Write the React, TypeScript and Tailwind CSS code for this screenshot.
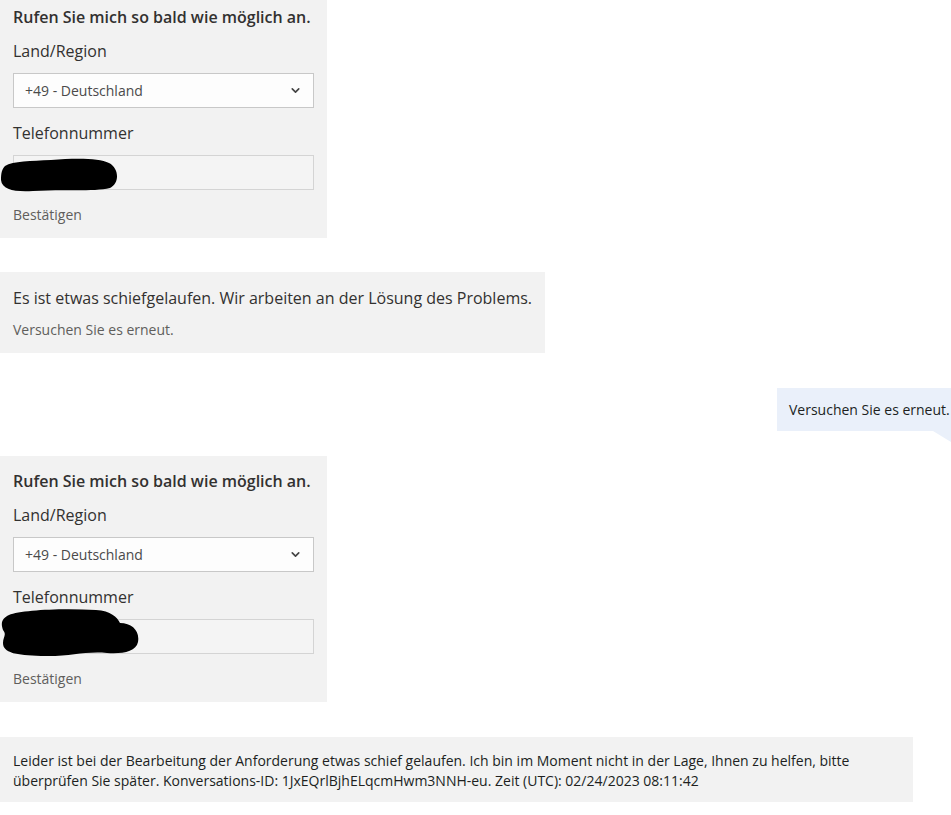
import { ChevronDown } from "lucide-react";

const font = { fontFamily: "'Open Sans', 'Noto Sans', sans-serif" };

function Scribble({ variant }: { variant: 1 | 2 }) {
  if (variant === 1) {
    return (
      <svg
        className="absolute left-[-13px] top-[1px]"
        width="118"
        height="35"
        viewBox="0 0 118 35"
      >
        <path
          d="M4 9 C12 4, 30 4, 50 3 C75 1, 98 1, 108 6 C118 11, 119 26, 109 31 C92 35, 62 32, 32 34 C14 35, 1 33, 0 23 C0 16, 1 12, 4 9Z"
          fill="#000"
        />
      </svg>
    );
  }
  return (
    <svg
      className="absolute left-[-13px] top-[-12px]"
      width="138"
      height="50"
      viewBox="0 0 138 50"
    >
      <path
        d="M8 7 C20 2, 60 0, 95 2 C110 3, 116 9, 119 15 C131 15, 139 23, 137 34 C135 44, 121 46, 106 45 C82 43, 70 49, 40 48 C15 47, 2 45, 2 35 C2 29, 6 27, 2 22 C-1 14, 2 10, 8 7Z"
        fill="#000"
      />
    </svg>
  );
}

function CallCard({ top, variant }: { top: string; variant: 1 | 2 }) {
  return (
    <div className={`w-[327px] bg-[#f2f2f2] px-[13px] pb-[13px] ${top}`}>
      <h2 className="text-[16px] leading-[22px] font-semibold text-[#323130]">
        Rufen Sie mich so bald wie möglich an.
      </h2>
      <div className="mt-[12px] text-[16px] leading-[22px] text-[#323130]">
        Land/Region
      </div>
      <div className="mt-[11px] flex h-[35px] items-center justify-between border border-[#c8c8c8] bg-[#fdfdfd] pl-[11px] pr-[11px] text-[14px] text-[#4a4a4a]">
        <span>+49 - Deutschland</span>
        <ChevronDown size={13} strokeWidth={3} className="text-[#444]" />
      </div>
      <div className="mt-[14px] text-[16px] leading-[22px] text-[#323130]">
        Telefonnummer
      </div>
      <div className="relative mt-[11px] h-[35px] border border-[#d4d4d4] bg-[#f4f4f4]">
        <Scribble variant={variant} />
      </div>
      <div className="mt-[15px] text-[14px] leading-[20px] text-[#605e5c]">
        Bestätigen
      </div>
    </div>
  );
}

export default function App() {
  return (
    <div className="min-h-[815px] w-[951px] overflow-hidden bg-white" style={font}>
      <CallCard top="pt-[6px]" variant={1} />

      <div className="mt-[34px] w-[545px] bg-[#f2f2f2] px-[13px] pt-[15px] pb-[13px]">
        <p className="text-[16px] leading-[22px] text-[#323130]">
          Es ist etwas schiefgelaufen. Wir arbeiten an der Lösung des Problems.
        </p>
        <p className="mt-[11px] text-[14px] leading-[20px] text-[#605e5c]">
          Versuchen Sie es erneut.
        </p>
      </div>

      <div className="mt-[35px] flex flex-col items-end">
        <div className="h-[43px] w-[174px] bg-[#eaf0fa] pl-[12px] pt-[12px] text-[14px] leading-[20px] whitespace-nowrap text-[#201f1e]">
          Versuchen Sie es erneut.
        </div>
        <svg width="18" height="11" viewBox="0 0 18 11" className="block">
          <polygon points="0,0 18,0 18,11" fill="#eaf0fa" />
        </svg>
      </div>

      <div className="mt-[14px]">
        <CallCard top="pt-[14px]" variant={2} />
      </div>

      <div className="mt-[35px] w-[913px] bg-[#f2f2f2] px-[13px] pt-[14px] pb-[11px] text-[14px] leading-[20px] text-[#201f1e]">
        Leider ist bei der Bearbeitung der Anforderung etwas schief gelaufen. Ich bin im Moment nicht in der Lage, Ihnen zu helfen, bitte
        überprüfen Sie später. Konversations-ID: 1JxEQrlBjhELqcmHwm3NNH-eu. Zeit (UTC): 02/24/2023 08:11:42
      </div>
    </div>
  );
}
